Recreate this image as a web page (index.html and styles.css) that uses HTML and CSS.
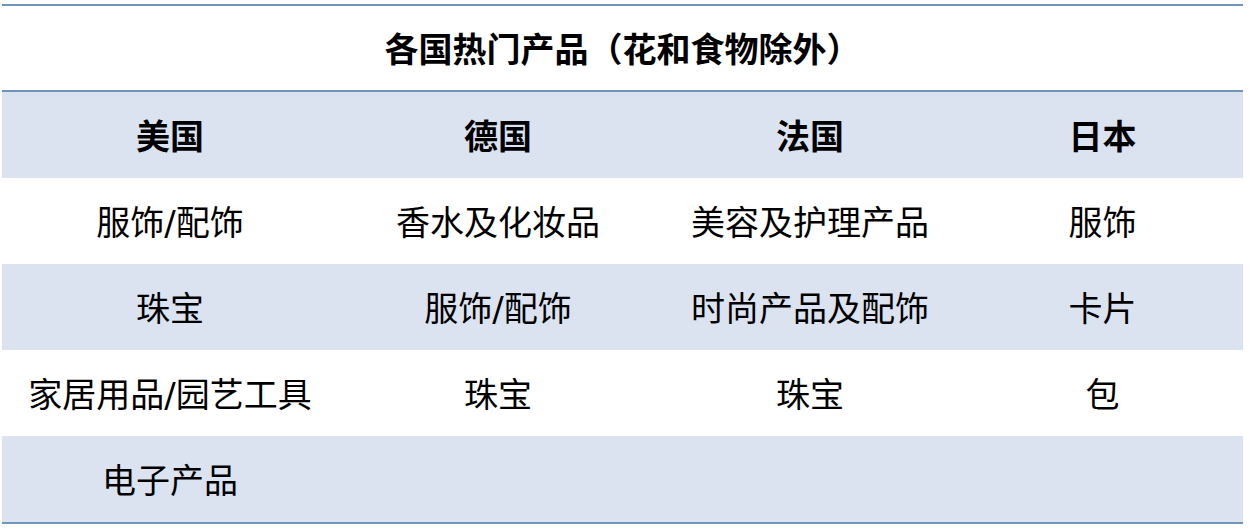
FILE: index.html
```html
<!DOCTYPE html>
<html lang="zh">
<head>
<meta charset="utf-8">
<link rel="stylesheet" href="styles.css">
</head>
<body>
<table class="products">
  <colgroup>
    <col class="c1"><col class="c2"><col class="c3"><col class="c4">
  </colgroup>
  <thead>
    <tr class="title-row"><th colspan="4">各国热门产品（花和食物除外）</th></tr>
    <tr class="head-row"><th>美国</th><th>德国</th><th>法国</th><th>日本</th></tr>
  </thead>
  <tbody>
    <tr class="odd"><td>服饰/配饰</td><td>香水及化妆品</td><td>美容及护理产品</td><td>服饰</td></tr>
    <tr class="even"><td>珠宝</td><td>服饰/配饰</td><td>时尚产品及配饰</td><td>卡片</td></tr>
    <tr class="odd"><td>家居用品/园艺工具</td><td>珠宝</td><td>珠宝</td><td>包</td></tr>
    <tr class="even"><td>电子产品</td><td></td><td></td><td></td></tr>
  </tbody>
</table>
</body>
</html>
```

FILE: styles.css
```css
html, body {
  margin: 0;
  padding: 0;
  background: #ffffff;
}
.products {
  margin: 4px 0 0 2px;
  width: 1241px;
  border-collapse: collapse;
  table-layout: fixed;
  font-family: "DejaVu Sans", "Noto Sans CJK SC", sans-serif;
  font-size: 34px;
  color: #000;
  border-top: 2px solid #7194bc;
  border-bottom: 2px solid #7194bc;
}
.c1 { width: 336px; }
.c2 { width: 320px; }
.c3 { width: 304px; }
.c4 { width: 281px; }
.products th,
.products td {
  height: 82px;
  padding: 4px 0 0;
  text-align: center;
  vertical-align: middle;
  line-height: 1;
}
.products th { font-weight: 700; }
.title-row th {
  height: 80px;
  border-bottom: 2px solid #7194bc;
  background: #ffffff;
}
.head-row th { background: #dbe3f0; }
.odd td { background: #ffffff; }
.even td { background: #dbe3f0; }
```
